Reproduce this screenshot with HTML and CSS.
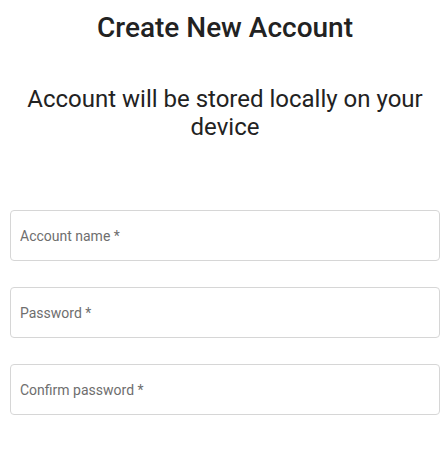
FILE: index.html
```html
<!DOCTYPE html>
<html lang="en">
<head>
    <meta charset="UTF-8">
    <meta name="viewport" content="width=device-width, initial-scale=1.0">
    <title>Create New Account</title>
    <link rel="stylesheet" href="styles.css">
</head>
<body>
    <div class="container">
        <h1>Create New Account</h1>
        <p class="subtitle">Account will be stored locally on your device</p>

        <form class="form">
            <input type="text" class="field" placeholder="Account name *">
            <input type="password" class="field" placeholder="Password *">
            <input type="password" class="field" placeholder="Confirm password *">
        </form>
    </div>
</body>
</html>
```

FILE: styles.css
```css
body {
    font-family: Roboto, "Noto Sans", sans-serif;
    margin: 0;
    padding: 0 5px 0 10px;
    background: #fff;
    color: #222;
}
.container {
    display: flex;
    flex-direction: column;
}
h1 {
    font-size: 28px;
    font-weight: 500;
    text-align: center;
    margin: 12px 0 0;
    line-height: 32px;
}
.subtitle {
    font-size: 24px;
    text-align: center;
    line-height: 28px;
    margin: 41px 0 0;
    padding: 0 8px;
}
.form {
    display: flex;
    flex-direction: column;
    gap: 26px;
    margin-top: 69px;
}
.field {
    height: 51px;
    box-sizing: border-box;
    border: 1px solid #d6d6d6;
    border-radius: 4px;
    padding: 0 9px;
    font-family: Roboto, sans-serif;
    font-size: 14px;
    color: #333;
}
.field::placeholder {
    color: #6e6e6e;
}
```
